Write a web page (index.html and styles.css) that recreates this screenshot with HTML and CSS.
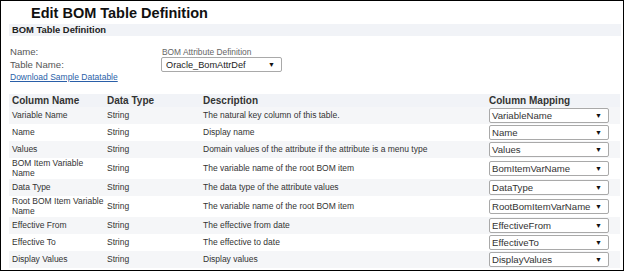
FILE: index.html
```html
<!DOCTYPE html>
<html lang="en">
<head>
    <meta charset="UTF-8">
    <meta name="viewport" content="width=device-width, initial-scale=1.0">
    <title>Edit BOM Table Definition</title>
    <link rel="stylesheet" href="styles.css">
</head>
<body>
    <div class="page">
        <h1 class="page-title">Edit BOM Table Definition</h1>
        <div class="section-bar">BOM Table Definition</div>

        <div class="def-form">
            <div class="form-label">Name:</div>
            <div class="form-value small">BOM Attribute Definition</div>
            <div class="form-label">Table Name:</div>
            <div class="form-value">
                <div class="fake-select table-select">
                    <span class="select-text">Oracle_BomAttrDef</span>
                    <span class="select-arrow">&#9660;</span>
                </div>
            </div>
            <a class="sample-link" href="#">Download Sample Datatable</a>
        </div>

        <table class="bom-table">
            <colgroup>
                <col class="col-name">
                <col class="col-type">
                <col class="col-desc">
                <col class="col-map">
            </colgroup>
            <thead>
                <tr>
                    <th>Column Name</th>
                    <th>Data Type</th>
                    <th>Description</th>
                    <th>Column Mapping</th>
                </tr>
            </thead>
            <tbody>
                <tr>
                    <td>Variable Name</td>
                    <td>String</td>
                    <td>The natural key column of this table.</td>
                    <td><div class="fake-select"><span class="select-text">VariableName</span><span class="select-arrow">&#9660;</span></div></td>
                </tr>
                <tr>
                    <td>Name</td>
                    <td>String</td>
                    <td>Display name</td>
                    <td><div class="fake-select"><span class="select-text">Name</span><span class="select-arrow">&#9660;</span></div></td>
                </tr>
                <tr>
                    <td>Values</td>
                    <td>String</td>
                    <td>Domain values of the attribute if the attribute is a menu type</td>
                    <td><div class="fake-select"><span class="select-text">Values</span><span class="select-arrow">&#9660;</span></div></td>
                </tr>
                <tr>
                    <td>BOM Item Variable Name</td>
                    <td>String</td>
                    <td>The variable name of the root BOM item</td>
                    <td><div class="fake-select"><span class="select-text">BomItemVarName</span><span class="select-arrow">&#9660;</span></div></td>
                </tr>
                <tr>
                    <td>Data Type</td>
                    <td>String</td>
                    <td>The data type of the attribute values</td>
                    <td><div class="fake-select"><span class="select-text">DataType</span><span class="select-arrow">&#9660;</span></div></td>
                </tr>
                <tr>
                    <td>Root BOM Item Variable Name</td>
                    <td>String</td>
                    <td>The variable name of the root BOM item</td>
                    <td><div class="fake-select"><span class="select-text">RootBomItemVarName</span><span class="select-arrow">&#9660;</span></div></td>
                </tr>
                <tr>
                    <td>Effective From</td>
                    <td>String</td>
                    <td>The effective from date</td>
                    <td><div class="fake-select"><span class="select-text">EffectiveFrom</span><span class="select-arrow">&#9660;</span></div></td>
                </tr>
                <tr>
                    <td>Effective To</td>
                    <td>String</td>
                    <td>The effective to date</td>
                    <td><div class="fake-select"><span class="select-text">EffectiveTo</span><span class="select-arrow">&#9660;</span></div></td>
                </tr>
                <tr>
                    <td>Display Values</td>
                    <td>String</td>
                    <td>Display values</td>
                    <td><div class="fake-select"><span class="select-text">DisplayValues</span><span class="select-arrow">&#9660;</span></div></td>
                </tr>
            </tbody>
        </table>
    </div>
</body>
</html>
```

FILE: styles.css
```css
* {
    margin: 0;
    padding: 0;
    box-sizing: border-box;
}

body {
    font-family: "Liberation Sans", Arial, Helvetica, sans-serif;
    background-color: #ffffff;
    color: #333;
}

.page {
    width: 624px;
    height: 271px;
    border: 1px solid #000;
    padding: 2px 2px 0 8px;
    overflow: hidden;
}

.page-title {
    font-size: 14.5px;
    font-weight: bold;
    color: #111;
    line-height: 21px;
    padding-left: 22px;
}

.section-bar {
    background: #f1f3f7;
    height: 12px;
    line-height: 12px;
    font-size: 9.4px;
    font-weight: bold;
    color: #222;
    padding-left: 3px;
}

.def-form {
    display: grid;
    grid-template-columns: 151px auto;
    padding: 10px 0 0 1px;
    font-size: 9.6px;
    color: #555;
}

.form-label,
.form-value {
    display: flex;
    align-items: center;
}

.form-label {
    line-height: 11px;
}

.form-value.small {
    font-size: 8.4px;
    color: #666;
    padding-left: 1px;
}

.sample-link {
    grid-column: 1 / 3;
    font-size: 8.5px;
    line-height: 11px;
    color: #2a5fa8;
    text-decoration: underline;
}

.fake-select {
    display: flex;
    align-items: center;
    justify-content: space-between;
    width: 120px;
    height: 15px;
    border: 1px solid #a9a9a9;
    border-radius: 2px;
    background: #fff;
    padding: 0 6px 0 2px;
    font-size: 9.6px;
    color: #333;
}

.table-select {
    width: 121px;
    font-size: 9.2px;
    padding-left: 4px;
    color: #222;
}

.select-arrow {
    font-size: 7px;
    color: #111;
}

.bom-table {
    width: 611px;
    margin-top: 11px;
    border-collapse: collapse;
    table-layout: fixed;
}

.col-name { width: 96px; }
.col-type { width: 95px; }
.col-desc { width: 286px; }
.col-map { width: 134px; }

.bom-table th {
    text-align: left;
    font-size: 10px;
    line-height: 11px;
    font-weight: bold;
    color: #333;
    padding: 1px 3px;
}

.bom-table td {
    font-size: 8.5px;
    line-height: 9.5px;
    color: #333;
    padding: 1px 3px;
    vertical-align: middle;
}

.bom-table th:first-child,
.bom-table td:first-child {
    padding-right: 0;
}

.bom-table th:nth-child(2),
.bom-table td:nth-child(2) {
    padding-left: 2px;
}

.bom-table thead tr {
    background: #f1f3f7;
}

.bom-table tbody tr:nth-child(odd) {
    background: #f5f6f8;
}
```
